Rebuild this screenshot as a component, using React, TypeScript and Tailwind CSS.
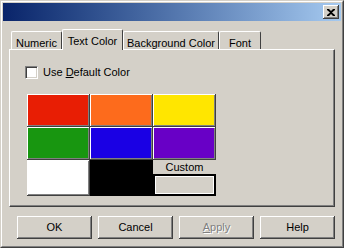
const raised =
  "shadow-[inset_-1px_-1px_#404040,inset_1px_1px_#ffffff,inset_-2px_-2px_#808080]";

const swatches = ["#e81e04", "#fd6b1c", "#ffe600", "#189610", "#1a00e4", "#6800c6"];

function Tab({ label, width, active }: { label: string; width: string; active?: boolean }) {
  if (active) {
    return (
      <div
        className={`relative z-10 -mb-px flex h-[21px] ${width} items-start justify-center rounded-t-[2px] border-l border-r border-t border-l-white border-t-white border-r-[#404040] bg-[#d4d0c8] pt-[3px]`}
      >
        {label}
      </div>
    );
  }
  return (
    <div
      className={`flex h-[18px] ${width} items-start justify-center rounded-t-[2px] border-l border-r border-t border-l-white border-t-white border-r-[#404040] pt-[3px]`}
    >
      {label}
    </div>
  );
}

function Button({ children, disabled }: { children: React.ReactNode; disabled?: boolean }) {
  return (
    <div
      className={`flex h-[23px] w-[75px] items-center justify-center bg-[#d4d0c8] ${raised} ${
        disabled ? "text-[#808080] [text-shadow:1px_1px_#ffffff]" : ""
      }`}
    >
      {children}
    </div>
  );
}

export default function App() {
  return (
    <div
      className="h-[248px] w-[344px] border border-b-[#404040] border-l-[#d4d0c8] border-r-[#404040] border-t-[#d4d0c8] bg-[#d4d0c8] text-[11px] text-black"
      style={{ fontFamily: '"Liberation Sans", Arial, sans-serif' }}
    >
      <div className="flex h-full flex-col border border-b-[#808080] border-l-white border-r-[#808080] border-t-white p-px">
        {/* title bar */}
        <div className="flex h-[18px] items-center justify-end bg-gradient-to-r from-[#0a246a] to-[#a6caf0] pr-[2px]">
          <div className={`flex h-[14px] w-[16px] items-center justify-center bg-[#d4d0c8] ${raised}`}>
            <svg width="8" height="7" viewBox="0 0 8 7">
              <path d="M0 0h2l2 2 2-2h2v1L5 3.5 8 6v1H6L4 5 2 7H0V6l3-2.5L0 1z" fill="#000" />
            </svg>
          </div>
        </div>

        {/* tabs + panel */}
        <div className="flex flex-col pl-[6px] pt-[8px]">
          <div className="flex h-[20px] items-end pl-[2px]">
            <Tab label="Numeric" width="w-[51px]" />
            <Tab label="Text Color" width="w-[61px]" active />
            <Tab label="Background Color" width="w-[96px]" />
            <Tab label="Font" width="w-[42px]" />
          </div>
          <div className="flex h-[158px] w-[326px] flex-col border border-b-[#404040] border-l-white border-r-[#404040] border-t-white pl-[15px] pt-[16px] shadow-[inset_-1px_-1px_#808080]">
            <div className="flex h-[13px] items-center gap-[5px]">
              <div className="h-[13px] w-[13px] border border-b-white border-l-[#808080] border-r-white border-t-[#808080] bg-white shadow-[inset_1px_1px_#404040,inset_-1px_-1px_#d4d0c8]" />
              <span className="leading-none">
                Use <span className="underline">D</span>efault Color
              </span>
            </div>
            <div className="ml-[2px] mt-[15px] grid w-[189px] grid-cols-[63px_63px_63px] grid-rows-[33px_33px_36px]">
              {swatches.map((c) => (
                <div key={c} className={raised} style={{ backgroundColor: c }} />
              ))}
              <div className={`bg-white ${raised}`} />
              <div className="bg-black" />
              <div className="flex flex-col">
                <div className="flex h-[14px] items-center justify-center">Custom</div>
                <div className="h-[23px] border-2 border-black bg-[#d4d0c8] shadow-[inset_1px_1px_#ffffff,inset_-1px_-1px_#ffffff]" />
              </div>
            </div>
          </div>
        </div>

        {/* buttons */}
        <div className="ml-[14px] mt-[9px] flex gap-[6px]">
          <Button>OK</Button>
          <Button>Cancel</Button>
          <Button disabled>
            <span>
              <span className="underline">A</span>pply
            </span>
          </Button>
          <Button>Help</Button>
        </div>
      </div>
    </div>
  );
}
